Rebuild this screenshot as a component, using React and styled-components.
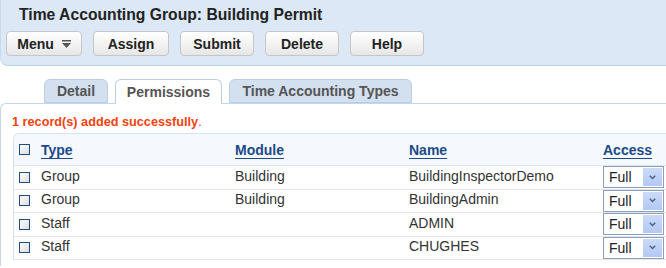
import React from 'react';
import styled, { createGlobalStyle } from 'styled-components'

const GlobalStyle = createGlobalStyle`
    body {
        margin: 0;
        font-family: "Liberation Sans", Arial, sans-serif;
        background: #fff;
        color: #333;
        overflow: hidden;
    }
`

const Header = styled.div`
    background: #dce8f5;
    border-bottom: 1px solid #b9cee7;
    border-left: 1px solid #c9d9ec;
    border-bottom-left-radius: 8px;
    height: 66px;
    box-sizing: border-box;
    padding: 5px 0 0 0;
`

const Title = styled.h1`
    margin: 0 0 7px 18px;
    font-size: 15.7px;
    line-height: 19px;
    font-weight: bold;
    color: #222;
`

const Toolbar = styled.div`
    display: flex;
    gap: 11px;
    padding-left: 5px;
`

const Button = styled.button`
    width: ${props => props.width || 74}px;
    height: 25px;
    display: flex;
    align-items: center;
    justify-content: center;
    gap: 8px;
    padding: 0;
    border: 1px solid #c6c6c6;
    border-radius: 4px;
    background: linear-gradient(#ffffff, #f1f1f1 60%, #e6e6e6);
    font-family: inherit;
    font-size: 14px;
    font-weight: bold;
    color: #222;
`

const Tabs = styled.div`
    display: flex;
    gap: 7px;
    margin: 13px 0 0 44px;
    height: 24px;
    align-items: flex-end;
`

const Tab = styled.div`
    height: ${props => props.active ? 25 : 24}px;
    margin-bottom: ${props => props.active ? -1 : 0}px;
    width: ${props => props.width}px;
    box-sizing: border-box;
    border: 1px solid #b9cde5;
    border-bottom: ${props => props.active ? 'none' : '1px solid #b9cde5'};
    border-radius: 6px 6px 0 0;
    background: ${props => props.active ? '#fff' : '#d3e0ef'};
    display: flex;
    align-items: center;
    justify-content: center;
    font-size: 14px;
    font-weight: bold;
    color: #555;
    position: relative;
    z-index: 1;
`

const Content = styled.div`
    border-top: 1px solid #c3d6ec;
    border-left: 1px solid #c3d6ec;
    border-top-left-radius: 6px;
    padding: 11px 0 0 0;
    height: 163px;
    box-sizing: border-box;
`

const Message = styled.div`
    margin-left: 11px;
    font-size: 12.7px;
    line-height: 14px;
    font-weight: bold;
    color: #f2420f;
    span {
        font-weight: normal;
    }
`

const Table = styled.div`
    margin: 4px 0 0 12px;
    border-top: 1px solid #d5e3f1;
    border-left: 1px solid #d5e3f1;
    border-top-left-radius: 6px;
`

const Row = styled.div`
    display: grid;
    grid-template-columns: 27px 194px 174px 194px 1fr;
    align-items: center;
    height: ${props => props.head ? 32 : 23.5}px;
    box-sizing: border-box;
    border-bottom: 1px solid ${props => props.head ? '#dbe6f1' : '#e6e6e6'};
    background: ${props => props.head ? '#f5f9fd' : '#fff'};
    border-top-left-radius: ${props => props.head ? '6px' : '0'};
`

const Cell = styled.div`
    font-size: 14px;
    color: #333;
    padding-bottom: ${props => props.head ? 0 : 3}px;
    white-space: nowrap;
`

const HeadLink = styled.a`
    font-size: 14px;
    font-weight: bold;
    color: #1d4a87;
    text-decoration: underline;
    text-underline-offset: 3px;
    text-decoration-thickness: 1px;
`

const Check = styled.span`
    display: block;
    width: 9px;
    height: 9px;
    margin-left: 5px;
    border: 1px solid #1f4e80;
    background: linear-gradient(135deg, #ffffff, #dcdcdc);
`

const Select = styled.div`
    width: 61px;
    height: 22px;
    box-sizing: border-box;
    border: 1px solid #8a9fbd;
    display: flex;
    align-items: center;
    justify-content: space-between;
    padding: 1px 1px 1px 5px;
    background: #fff;
    font-size: 14px;
    color: #222;
`

const SelectButton = styled.span`
    width: 19px;
    height: 18px;
    background: linear-gradient(#ccdaf8, #b3c8f4);
    display: flex;
    align-items: center;
    justify-content: center;
`

const MenuIcon = () => (
    <svg width="9" height="8" viewBox="0 0 9 8">
        <rect x="0" y="0" width="9" height="1.5" fill="#555" />
        <path d="M0 3 L9 3 L4.5 8 Z" fill="#555" />
    </svg>
)

const Chevron = () => (
    <svg width="7" height="5" viewBox="0 0 7 5">
        <path d="M0.8 0.8 L3.5 3.6 L6.2 0.8" stroke="#4a5f86" strokeWidth="1.4" fill="none" />
    </svg>
)

const rows = [
    { type: 'Group', module: 'Building', name: 'BuildingInspectorDemo' },
    { type: 'Group', module: 'Building', name: 'BuildingAdmin' },
    { type: 'Staff', module: '', name: 'ADMIN' },
    { type: 'Staff', module: '', name: 'CHUGHES' },
]

const App = () => {
    return (
        <>
            <GlobalStyle />
            <Header>
                <Title>Time Accounting Group: Building Permit</Title>
                <Toolbar>
                    <Button width={76}>Menu <MenuIcon /></Button>
                    <Button width={76}>Assign</Button>
                    <Button>Submit</Button>
                    <Button>Delete</Button>
                    <Button>Help</Button>
                </Toolbar>
            </Header>
            <Tabs>
                <Tab width={64}>Detail</Tab>
                <Tab width={107} active>Permissions</Tab>
                <Tab width={183}>Time Accounting Types</Tab>
            </Tabs>
            <Content>
                <Message>1 record(s) added successfully<span>.</span></Message>
                <Table>
                    <Row head>
                        <Check />
                        <Cell head><HeadLink>Type</HeadLink></Cell>
                        <Cell head><HeadLink>Module</HeadLink></Cell>
                        <Cell head><HeadLink>Name</HeadLink></Cell>
                        <Cell head><HeadLink>Access</HeadLink></Cell>
                    </Row>
                    {rows.map((r, i) => (
                        <Row key={i}>
                            <Check />
                            <Cell>{r.type}</Cell>
                            <Cell>{r.module}</Cell>
                            <Cell>{r.name}</Cell>
                            <Select>Full<SelectButton><Chevron /></SelectButton></Select>
                        </Row>
                    ))}
                </Table>
            </Content>
        </>
    )
}

export default App;
